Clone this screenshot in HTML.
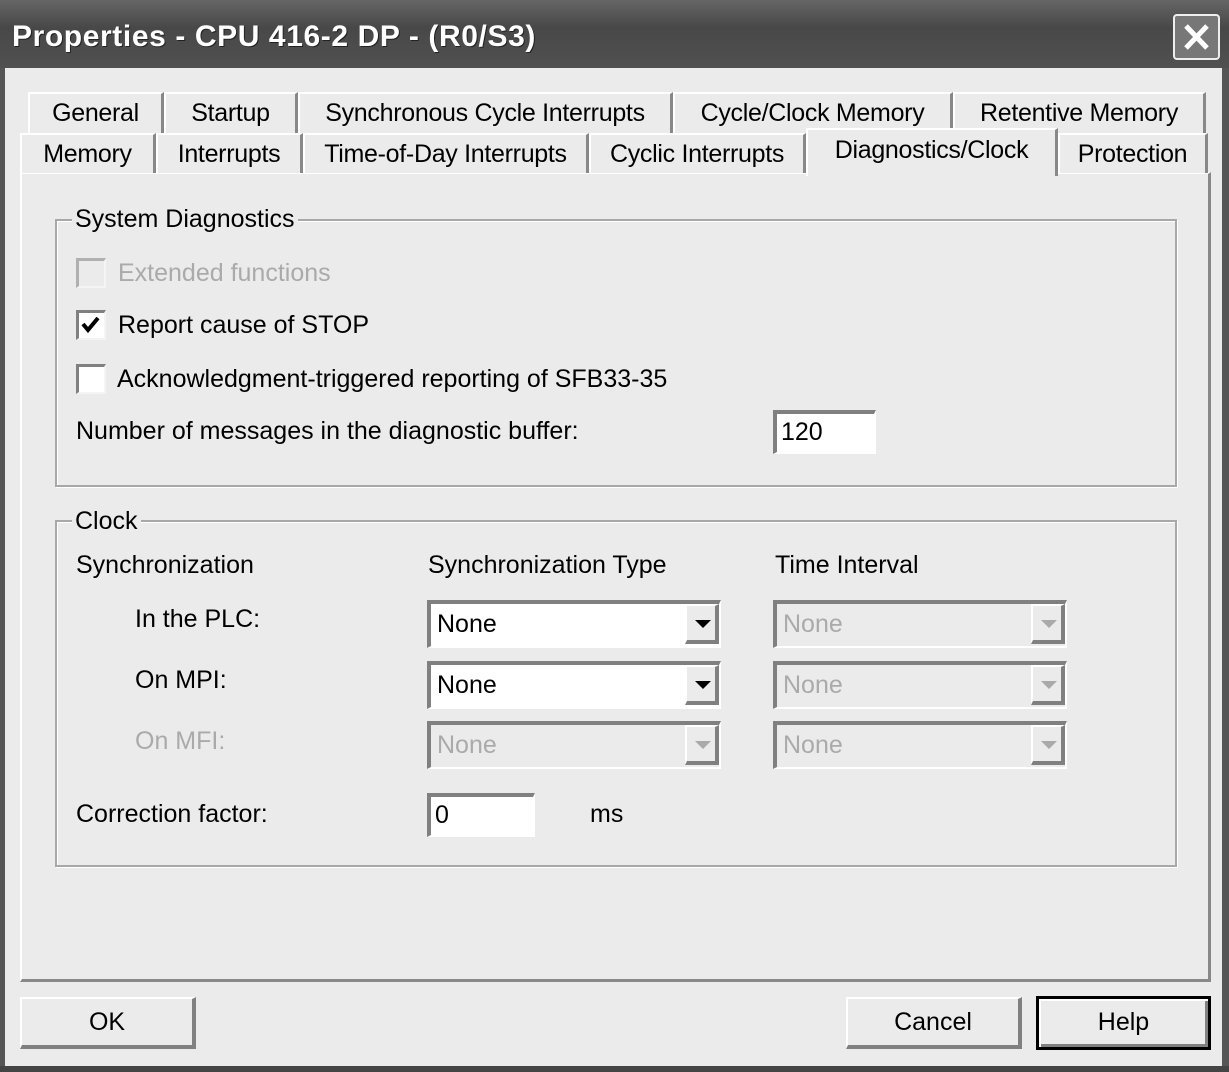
<!DOCTYPE html>
<html><head><meta charset="utf-8">
<style>
*{margin:0;padding:0;box-sizing:border-box}
body{width:1229px;height:1072px;overflow:hidden;background:#ebebeb;font-family:"Liberation Sans",sans-serif;font-size:25px;color:#000;position:relative}
.a{position:absolute}
.t{position:absolute;white-space:nowrap;line-height:30px;letter-spacing:0}
.g{color:#aaa}
.tab{position:absolute;border-top:2px solid #fff;border-left:2px solid #fff;border-right:3px solid #888;background:#ebebeb;text-align:center;line-height:38px;white-space:nowrap;letter-spacing:-0.3px}
.grp{position:absolute;border:2px solid #a8a8a8;box-shadow:inset 1px 1px 0 #fff,1px 1px 0 #fff}
.lg{position:absolute;background:#ebebeb;padding:0 3px;line-height:30px;letter-spacing:0;white-space:nowrap}
.cb{position:absolute;width:30px;height:30px;border-top:3px solid #808080;border-left:3px solid #808080;border-right:2px solid #f4f4f4;border-bottom:2px solid #f4f4f4;background:#fff}
.combo{position:absolute;height:48px;border-top:4px solid #808080;border-left:4px solid #808080;border-right:2px solid #fff;border-bottom:2px solid #fff;background:#fff;line-height:40px;padding-left:6px}
.combo.d{background:#ebebeb;color:#aaa}
.btn{position:absolute;right:0;top:0;width:34px;height:40px;background:#ebebeb;border-top:2px solid #fff;border-left:2px solid #fff;border-right:4px solid #808080;border-bottom:4px solid #808080}
.btn:after{content:"";position:absolute;left:8px;top:14px;border-left:8px solid transparent;border-right:8px solid transparent;border-top:8px solid #000}
.combo.d .btn:after{border-top-color:#aaa}
.edit{position:absolute;height:44px;border-top:4px solid #808080;border-left:4px solid #808080;border-right:2px solid #fff;border-bottom:2px solid #fff;background:#fff;line-height:36px;padding-left:4px}
.pb{position:absolute;height:52px;background:#ebebeb;border-top:2px solid #fff;border-left:2px solid #fff;border-right:4px solid #808080;border-bottom:4px solid #808080;text-align:center;line-height:46px}
</style></head><body>
<div class="a" style="left:0;top:0;width:1229px;height:68px;background:linear-gradient(#666,#484848 40%,#505050 100%)"></div>
<div class="a" style="left:0;top:68px;width:5px;height:1004px;background:#555"></div>
<div class="a" style="right:0;top:68px;width:7px;height:1004px;background:#555"></div>
<div class="a" style="left:0;bottom:0;width:1229px;height:6px;background:#444"></div>
<div class="t" style="left:12px;top:22px;color:#fff;font-weight:bold;font-size:30px;letter-spacing:0.6px;text-shadow:1px 1px 0 #222">Properties - CPU 416-2 DP - (R0/S3)</div>
<div class="a" style="left:1173px;top:14px;width:47px;height:46px;border:2px solid #eee;border-radius:4px;background:#777"></div>
<svg class="a" style="left:1173px;top:14px" width="47" height="46"><path d="M13 12L34 34M34 12L13 34" stroke="#fff" stroke-width="5"/></svg>

<div class="a" style="left:20px;top:172px;width:1191px;height:810px;border-top:2px solid #fff;border-left:2px solid #fff;border-right:3px solid #888;border-bottom:3px solid #888"></div>

<div class="tab" style="left:28px;top:92px;width:136px;height:42px">General</div>
<div class="tab" style="left:164px;top:92px;width:134px;height:42px">Startup</div>
<div class="tab" style="left:298px;top:92px;width:375px;height:42px">Synchronous Cycle Interrupts</div>
<div class="tab" style="left:673px;top:92px;width:280px;height:42px">Cycle/Clock Memory</div>
<div class="tab" style="left:953px;top:92px;width:253px;height:42px">Retentive Memory</div>

<div class="tab" style="left:20px;top:133px;width:136px;height:40px">Memory</div>
<div class="tab" style="left:156px;top:133px;width:147px;height:40px">Interrupts</div>
<div class="tab" style="left:303px;top:133px;width:286px;height:40px">Time-of-Day Interrupts</div>
<div class="tab" style="left:589px;top:133px;width:217px;height:40px">Cyclic Interrupts</div>
<div class="tab" style="left:806px;top:128px;width:252px;height:48px;line-height:40px;border-right:3px solid #888;z-index:2">Diagnostics/Clock</div>
<div class="tab" style="left:1058px;top:133px;width:150px;height:40px">Protection</div>

<div class="grp" style="left:55px;top:219px;width:1122px;height:268px"></div>
<div class="lg" style="left:72px;top:204px">System Diagnostics</div>
<div class="cb" style="left:76px;top:258px;background:#ebebeb;border-top-color:#b0b0b0;border-left-color:#b0b0b0"></div>
<div class="t g" style="left:118px;top:258px">Extended functions</div>
<div class="cb" style="left:76px;top:310px"></div>
<svg class="a" style="left:79px;top:313px" width="24" height="24"><path d="M4 11L9 17L19 5" stroke="#000" stroke-width="4" fill="none"/></svg>
<div class="t" style="left:118px;top:310px">Report cause of STOP</div>
<div class="cb" style="left:76px;top:364px"></div>
<div class="t" style="left:117px;top:364px">Acknowledgment-triggered reporting of SFB33-35</div>
<div class="t" style="left:76px;top:416px">Number of messages in the diagnostic buffer:</div>
<div class="edit" style="left:773px;top:410px;width:103px">120</div>

<div class="grp" style="left:55px;top:520px;width:1122px;height:347px"></div>
<div class="lg" style="left:72px;top:506px">Clock</div>
<div class="t" style="left:76px;top:550px">Synchronization</div>
<div class="t" style="left:428px;top:550px">Synchronization Type</div>
<div class="t" style="left:775px;top:550px">Time Interval</div>
<div class="t" style="left:135px;top:604px">In the PLC:</div>
<div class="t" style="left:135px;top:665px">On MPI:</div>
<div class="t g" style="left:135px;top:726px">On MFI:</div>

<div class="combo" style="left:427px;top:600px;width:294px">None<div class="btn"></div></div>
<div class="combo" style="left:427px;top:661px;width:294px">None<div class="btn"></div></div>
<div class="combo d" style="left:427px;top:721px;width:294px">None<div class="btn"></div></div>
<div class="combo d" style="left:773px;top:600px;width:294px">None<div class="btn"></div></div>
<div class="combo d" style="left:773px;top:661px;width:294px">None<div class="btn"></div></div>
<div class="combo d" style="left:773px;top:721px;width:294px">None<div class="btn"></div></div>

<div class="t" style="left:76px;top:799px">Correction factor:</div>
<div class="edit" style="left:427px;top:793px;width:108px">0</div>
<div class="t" style="left:590px;top:799px">ms</div>

<div class="pb" style="left:20px;top:997px;width:176px">OK</div>
<div class="pb" style="left:846px;top:997px;width:176px">Cancel</div>
<div class="pb" style="left:1036px;top:996px;width:175px;height:54px;border:3px solid #000;box-shadow:inset 2px 2px 0 #fff,inset -3px -3px 0 #808080">Help</div>
</body></html>
